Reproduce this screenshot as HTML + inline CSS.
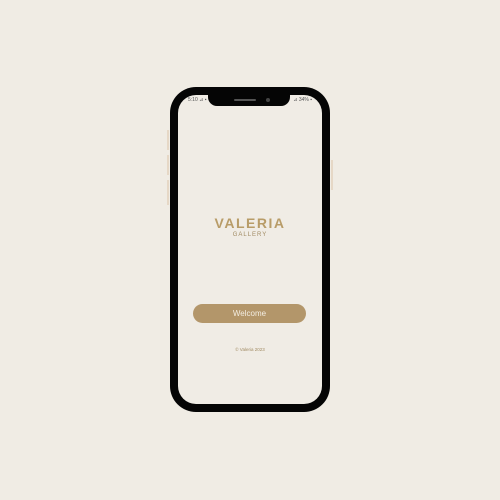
<!DOCTYPE html>
<html><head><style>
body{margin:0;width:500px;height:500px;background:#f0ece4;position:relative;overflow:hidden;font-family:"Liberation Sans",sans-serif}
.phone{position:absolute;left:170px;top:87px;width:160px;height:325px;background:#050505;border-radius:26px}
.screen{position:absolute;left:8px;top:8px;width:144px;height:309px;background:#f0ece5;border-radius:18px;overflow:hidden}
.notch{position:absolute;left:30px;top:0;width:82px;height:11px;background:#050505;border-radius:0 0 9px 9px}
.spk{position:absolute;left:26px;top:4px;width:22px;height:2px;background:#555;border-radius:1px}
.cam{position:absolute;left:58px;top:3px;width:4px;height:4px;background:#444;border-radius:50%}
.st{position:absolute;top:2px;font-size:5px;color:#555}
.logo{position:absolute;left:0;width:144px;text-align:center;color:#b89c68}
.btn{position:absolute;left:15px;top:209px;width:113px;height:19px;background:#b3966a;border-radius:10px;color:#f3ede2;font-size:8px;text-align:center;line-height:19px}
.side{position:absolute;background:#e6d8c6;width:2px}
</style></head><body>
<div class="side" style="left:167px;top:130px;height:20px"></div>
<div class="side" style="left:167px;top:155px;height:20px"></div>
<div class="side" style="left:167px;top:180px;height:25px"></div>
<div class="side" style="left:331px;top:160px;height:30px"></div>
<div class="phone"><div class="screen">
<div class="st" style="left:10px">5:10 ⊿ ▪</div>
<div class="st" style="right:10px">⊿ 34% ▪</div>
<div class="notch"><div class="spk"></div><div class="cam"></div></div>
<div class="logo" style="top:120px;font-size:14px;font-weight:bold;letter-spacing:1.5px">VALERIA</div>
<div class="logo" style="top:137px;font-size:6px;letter-spacing:1px;color:#a08a62">GALLERY</div>
<div class="btn">Welcome</div>
<div class="logo" style="top:252px;font-size:4.5px;color:#a08a62">© Valeria 2023</div>
</div></div>
</body></html>
